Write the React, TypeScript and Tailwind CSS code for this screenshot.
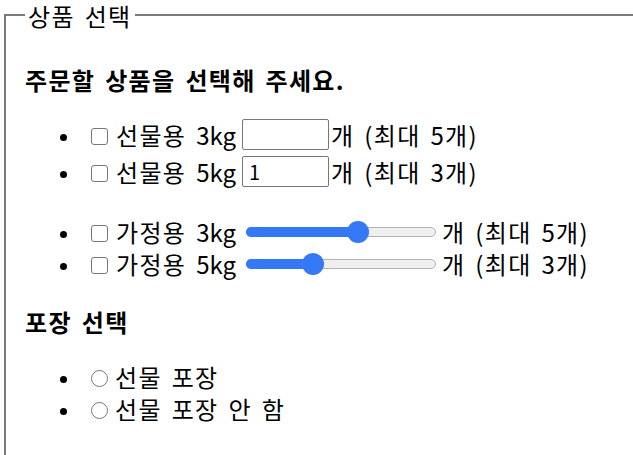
import React from 'react';

const Bullet = () => (
  <span className="ml-[35px] mr-[24px] mt-[5px] block h-[7px] w-[7px] shrink-0 rounded-full bg-black" />
);

const Check = () => (
  <span className="mr-[8px] mt-[3px] block h-[17px] w-[17px] shrink-0 rounded-[3px] border border-[#767676] bg-white" />
);

const Radio = () => (
  <span className="mr-[7px] mt-[3px] block h-[17px] w-[17px] shrink-0 rounded-full border border-[#767676] bg-white" />
);

interface SliderProps {
  value: number;
  max: number;
}

// track 190px, thumb 22px
const Slider = ({ value, max }: SliderProps) => {
  const center = 11 + (168 * value) / max;
  return (
    <span className="relative mr-[6px] block h-[22px] w-[190px] shrink-0">
      <span className="absolute left-0 right-0 top-[6px] h-[10px] rounded-full border border-[#b2b2b2] bg-[#efefef]" />
      <span
        className="absolute left-0 top-[6px] h-[10px] rounded-full bg-[#3478f6]"
        style={{ width: center }}
      />
      <span
        className="absolute top-0 h-[22px] w-[22px] rounded-full bg-[#3478f6]"
        style={{ left: center - 11 }}
      />
    </span>
  );
};

const Label = ({ ko, en }: { ko: string; en: string }) => (
  <>
    {ko} <span className="tracking-normal">{en}</span>
  </>
);

export default function App() {
  return (
    <div className="h-[455px] w-[633px] overflow-hidden bg-white font-['Noto_Sans_CJK_KR','Noto_Sans',sans-serif] text-[24px] leading-[32px] tracking-[1.3px] [word-spacing:3.3px] text-black">
      <fieldset className="ml-[4px] h-[520px] w-[720px] border-2 border-[#7a7a7a] pl-[19px]">
        <legend className="px-[3px] pt-[1px] leading-[29px]">상품 선택</legend>

        <div className="mt-[34px] font-bold">주문할 상품을 선택해 주세요.</div>

        <ul className="mt-[20px]">
          <li className="flex h-[37px] items-center">
            <Bullet />
            <Check />
            <span className="w-[126px] shrink-0 whitespace-nowrap">
              <Label ko="선물용" en="3kg" />
            </span>
            <input
              type="text"
              readOnly
              className="h-[31px] w-[87px] shrink-0 rounded-[2px] border border-[#767676] px-[6px] text-[20px] tracking-normal outline-none"
            />
            <span className="ml-[2px] whitespace-nowrap">개 (최대 5개)</span>
          </li>
          <li className="flex h-[37px] items-center">
            <Bullet />
            <Check />
            <span className="w-[126px] shrink-0 whitespace-nowrap">
              <Label ko="선물용" en="5kg" />
            </span>
            <input
              type="text"
              readOnly
              value="1"
              className="h-[31px] w-[87px] shrink-0 rounded-[2px] border border-[#767676] px-[6px] text-[20px] tracking-normal outline-none"
            />
            <span className="ml-[2px] whitespace-nowrap">개 (최대 3개)</span>
          </li>
        </ul>

        <ul className="mt-[26px]">
          <li className="flex h-[32px] items-center">
            <Bullet />
            <Check />
            <span className="w-[130px] shrink-0 whitespace-nowrap">
              <Label ko="가정용" en="3kg" />
            </span>
            <Slider value={3} max={5} />
            <span className="whitespace-nowrap">개 (최대 5개)</span>
          </li>
          <li className="flex h-[32px] items-center">
            <Bullet />
            <Check />
            <span className="w-[130px] shrink-0 whitespace-nowrap">
              <Label ko="가정용" en="5kg" />
            </span>
            <Slider value={1} max={3} />
            <span className="whitespace-nowrap">개 (최대 3개)</span>
          </li>
        </ul>

        <div className="mt-[26px] font-bold">포장 선택</div>

        <ul className="mt-[23px]">
          <li className="flex h-[32px] items-center">
            <Bullet />
            <Radio />
            <span className="whitespace-nowrap">선물 포장</span>
          </li>
          <li className="flex h-[32px] items-center">
            <Bullet />
            <Radio />
            <span className="whitespace-nowrap">선물 포장 안 함</span>
          </li>
        </ul>
      </fieldset>
    </div>
  );
}
